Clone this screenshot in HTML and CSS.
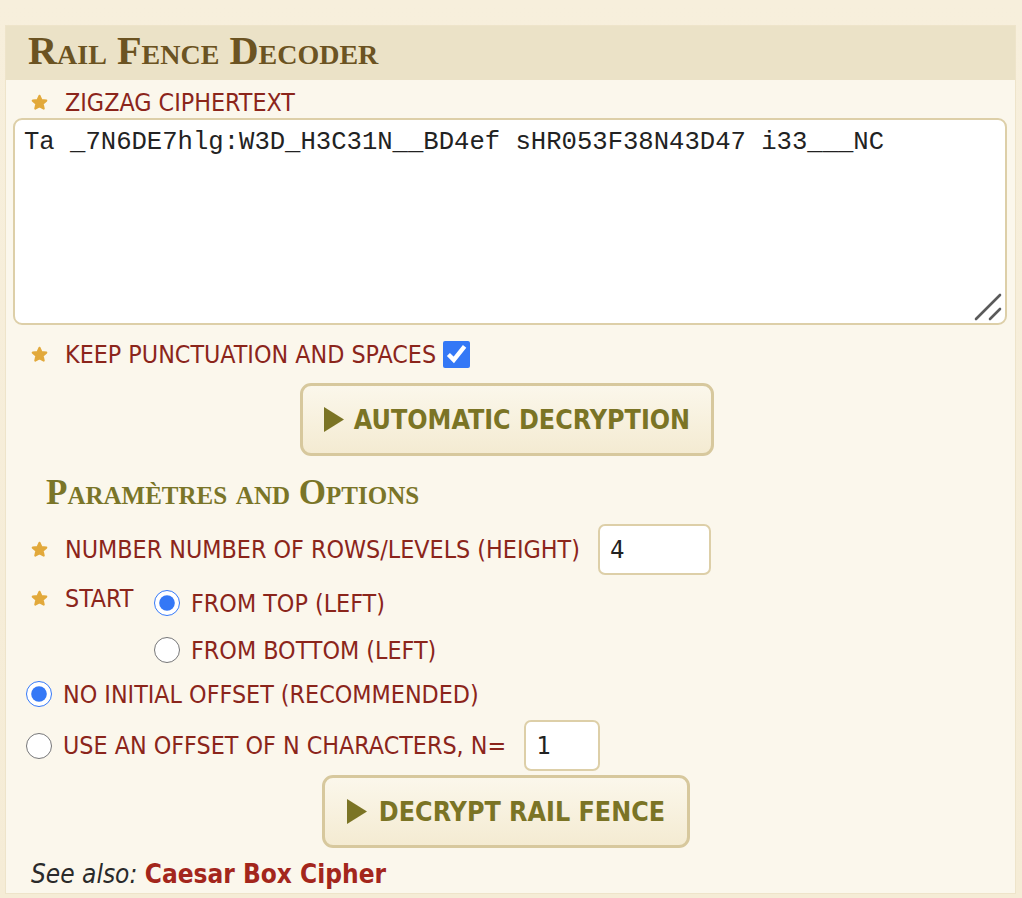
FILE: index.html
```html
<!DOCTYPE html>
<html>
<head>
<meta charset="utf-8">
<link rel="stylesheet" href="styles.css">
</head>
<body>
<div class="page">
  <section class="panel">
    <h2 class="panel-title">Rail Fence Decoder</h2>
    <div class="panel-body">
      <div class="label-row"><span class="star"><svg viewBox="0 0 20 20" width="17" height="17"><polygon points="10,2 12.4,7.2 18,7.8 13.8,11.6 15,17.2 10,14.4 5,17.2 6.2,11.6 2,7.8 7.6,7.2" fill="#e2a93b" stroke="#e2a93b" stroke-width="2.4" stroke-linejoin="round"/></svg></span><span class="label">ZIGZAG CIPHERTEXT</span></div>
      <div class="textarea-wrap">
        <textarea class="cipher" spellcheck="false">Ta _7N6DE7hlg:W3D_H3C31N__BD4ef sHR053F38N43D47 i33___NC</textarea>
        <svg class="grip" viewBox="0 0 30 30" width="30" height="30"><line x1="27" y1="4" x2="3" y2="28" stroke="#5a5a5a" stroke-width="2.6" stroke-linecap="round"/><line x1="27" y1="18" x2="17" y2="28" stroke="#5a5a5a" stroke-width="2.6" stroke-linecap="round"/></svg>
      </div>
      <div class="label-row keep"><span class="star"><svg viewBox="0 0 20 20" width="17" height="17"><polygon points="10,2 12.4,7.2 18,7.8 13.8,11.6 15,17.2 10,14.4 5,17.2 6.2,11.6 2,7.8 7.6,7.2" fill="#e2a93b" stroke="#e2a93b" stroke-width="2.4" stroke-linejoin="round"/></svg></span><span class="label">KEEP PUNCTUATION AND SPACES</span><input type="checkbox" class="check" checked></div>
      <div class="btn-row"><button class="btn btn-auto"><svg class="tri" viewBox="0 0 20 25" width="20" height="25"><polygon points="0,0 20,12.5 0,25" fill="#7b7425"/></svg><span>AUTOMATIC DECRYPTION</span></button></div>
      <h3 class="sub-title">Paramètres and Options</h3>
      <div class="label-row rows"><span class="star"><svg viewBox="0 0 20 20" width="17" height="17"><polygon points="10,2 12.4,7.2 18,7.8 13.8,11.6 15,17.2 10,14.4 5,17.2 6.2,11.6 2,7.8 7.6,7.2" fill="#e2a93b" stroke="#e2a93b" stroke-width="2.4" stroke-linejoin="round"/></svg></span><span class="label">NUMBER NUMBER OF ROWS/LEVELS (HEIGHT)</span><input type="text" class="num num-rows" value="4"></div>
      <div class="start-row">
        <div class="label-row"><span class="star"><svg viewBox="0 0 20 20" width="17" height="17"><polygon points="10,2 12.4,7.2 18,7.8 13.8,11.6 15,17.2 10,14.4 5,17.2 6.2,11.6 2,7.8 7.6,7.2" fill="#e2a93b" stroke="#e2a93b" stroke-width="2.4" stroke-linejoin="round"/></svg></span><span class="label start-label">START</span></div>
        <div class="radios">
          <label class="radio-line"><input type="radio" name="start" checked><span class="label">FROM TOP (LEFT)</span></label>
          <label class="radio-line"><input type="radio" name="start"><span class="label">FROM BOTTOM (LEFT)</span></label>
        </div>
      </div>
      <label class="radio-line offset"><input type="radio" name="offset" checked><span class="label">NO INITIAL OFFSET (RECOMMENDED)</span></label>
      <label class="radio-line offset off2"><input type="radio" name="offset"><span class="label">USE AN OFFSET OF N CHARACTERS, N=</span><input type="text" class="num num-off" value="1"></label>
      <div class="btn-row btn-row2"><button class="btn btn-dec"><svg class="tri" viewBox="0 0 20 25" width="20" height="25"><polygon points="0,0 20,12.5 0,25" fill="#7b7425"/></svg><span>DECRYPT RAIL FENCE</span></button></div>
      <p class="see-also"><em>See also:</em> <a class="link">Caesar Box Cipher</a></p>
    </div>
  </section>
</div>
</body>
</html>
```
FILE: styles.css
```css
html, body {
  margin: 0;
  padding: 0;
}
body {
  background: linear-gradient(#f7efdc, #f5ecd6);
  font-family: "DejaVu Sans Condensed", "DejaVu Sans", sans-serif;
  width: 1022px;
  height: 898px;
  overflow: hidden;
}
.page {
  padding: 25px 0 0 5px;
}
.panel {
  width: 1009px;
  border: 1px solid #eee4ca;
  background: #fbf7ec;
}
.panel-title {
  margin: 0;
  height: 54px;
  background: #ebe2c7;
  font-family: "Liberation Serif", serif;
  font-variant: small-caps;
  font-weight: bold;
  font-size: 40.3px;
  line-height: 49px;
  color: #6b5322;
  padding-left: 22px;
}
.panel-body {
  padding: 6px 8px 4px 7px;
}
.label-row {
  display: flex;
  align-items: center;
  height: 32px;
}
.star {
  width: 52px;
  flex: none;
  display: flex;
  justify-content: center;
  align-items: center;
}
.label {
  color: #8b251b;
  font-size: 24.8px;
  white-space: nowrap;
}
.textarea-wrap {
  position: relative;
  width: 994px;
}
.cipher {
  display: block;
  box-sizing: border-box;
  width: 994px;
  height: 207px;
  border: 2px solid #ddcfa8;
  border-radius: 9px;
  background: #fff;
  font-family: "Liberation Mono", monospace;
  font-size: 25.6px;
  line-height: 29px;
  color: #222;
  padding: 8px 9px 5px;
  resize: none;
  outline: none;
  margin: 0;
}
.grip {
  position: absolute;
  right: 4px;
  bottom: 4px;
  pointer-events: none;
}
.keep {
  margin-top: 13px;
}
.check {
  width: 27px;
  height: 27px;
  margin: 0 0 0 7px;
  accent-color: #3478f6;
}
.btn-row {
  display: flex;
  padding-left: 287px;
  margin-top: 13px;
}
.btn {
  display: flex;
  align-items: center;
  justify-content: center;
  gap: 10px;
  font-family: "DejaVu Sans Condensed", "DejaVu Sans", sans-serif;
  font-weight: bold;
  font-size: 26.6px;
  color: #7b7425;
  background: linear-gradient(#fbf7eb, #f4ebd2);
  border: 3px solid #d7c89d;
  border-radius: 11px;
  height: 73px;
  padding: 0;
  cursor: pointer;
}
.btn-auto {
  width: 414px;
}
.tri {
  flex: none;
}
.sub-title {
  margin: 17px 0 11px 33px;
  font-family: "Liberation Serif", serif;
  font-variant: small-caps;
  font-weight: bold;
  font-size: 35px;
  line-height: 40px;
  color: #7a7528;
}
.rows {
  height: 51px;
}
.num {
  box-sizing: border-box;
  height: 51px;
  border: 2px solid #ddcfa8;
  border-radius: 7px;
  background: #fff;
  font-family: "DejaVu Sans Mono", monospace;
  font-size: 24px;
  padding: 0 10px;
  margin-left: 18px;
  color: #222;
  outline: none;
}
.num-rows {
  width: 113px;
}
.start-row {
  display: flex;
  align-items: flex-start;
  margin-top: 7px;
}
.start-label {
  width: 89px;
}
.radios {
  display: flex;
  flex-direction: column;
  gap: 15px;
  padding-top: 5px;
}
.radio-line {
  display: flex;
  align-items: center;
  height: 32px;
}
.radio-line input[type=radio] {
  width: 26px;
  height: 26px;
  margin: 0 11px 0 0;
  accent-color: #3478f6;
}
.offset {
  margin-top: 12px;
  padding-left: 13px;
}
.off2 {
  margin-top: 10px;
  height: 51px;
}
.num-off {
  width: 76px;
  margin-left: 18px;
}
.btn-row2 {
  padding-left: 309px;
  margin-top: 4px;
}
.btn-dec {
  width: 368px;
  gap: 12px;
}
.see-also {
  margin: 11px 0 0 18px;
  font-size: 26px;
  line-height: 30px;
  color: #2a2a2a;
}
.see-also em {
  font-style: italic;
}
.link {
  color: #a3261c;
  font-weight: bold;
}
```
